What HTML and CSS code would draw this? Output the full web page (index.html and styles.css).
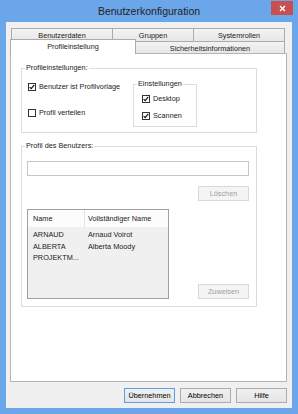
FILE: index.html
```html
<!DOCTYPE html>
<html lang="de">
<head>
    <meta charset="UTF-8">
    <title>Benutzerkonfiguration</title>
    <link rel="stylesheet" href="styles.css">
</head>
<body>

<div class="window">
    <div class="titlebar">
        <span class="title">Benutzerkonfiguration</span>
        <span class="close-btn">
            <svg width="7" height="7" viewBox="0 0 7 7"><path d="M1 1L6 6M6 1L1 6" stroke="#fff" stroke-width="1.4"/></svg>
        </span>
    </div>

    <div class="client">
        <div class="tabs">
            <div class="tab-row back">
                <div class="tab w-data">Benutzerdaten</div>
                <div class="tab w-groups">Gruppen</div>
                <div class="tab w-roles">Systemrollen</div>
            </div>
            <div class="tab-row front">
                <div class="tab active w-profile">Profileinstellung</div>
                <div class="tab w-security">Sicherheitsinformationen</div>
            </div>
        </div>

        <div class="panel">
            <fieldset class="group">
                <legend class="group-title">Profileinstellungen:</legend>
                <div class="prefs">
                    <div class="prefs-left">
                        <label class="check"><span class="box checked"><svg width="6" height="6" viewBox="0 0 6 6"><path d="M0.6 3.1L2.2 4.7L5.3 0.9" fill="none" stroke="#111" stroke-width="1.2"/></svg></span>Benutzer ist Profilvorlage</label>
                        <label class="check"><span class="box"></span>Profil verteilen</label>
                    </div>
                    <fieldset class="group inner">
                        <legend class="group-title">Einstellungen</legend>
                        <div class="inner-body">
                            <label class="check"><span class="box checked"><svg width="6" height="6" viewBox="0 0 6 6"><path d="M0.6 3.1L2.2 4.7L5.3 0.9" fill="none" stroke="#111" stroke-width="1.2"/></svg></span>Desktop</label>
                            <label class="check"><span class="box checked"><svg width="6" height="6" viewBox="0 0 6 6"><path d="M0.6 3.1L2.2 4.7L5.3 0.9" fill="none" stroke="#111" stroke-width="1.2"/></svg></span>Scannen</label>
                        </div>
                    </fieldset>
                </div>
            </fieldset>

            <fieldset class="group second">
                <legend class="group-title">Profil des Benutzers:</legend>
                <div class="profile">
                    <div class="textbox"></div>
                    <div class="row-right">
                        <button class="btn" disabled>Löschen</button>
                    </div>
                    <div class="list-row">
                        <div class="list">
                            <div class="list-head">
                                <span class="col-name">Name</span>
                                <span class="col-full">Vollständiger Name</span>
                            </div>
                            <div class="list-body">
                                <div class="list-item"><span class="col-name">ARNAUD</span><span class="col-full">Arnaud Voirot</span></div>
                                <div class="list-item"><span class="col-name">ALBERTA</span><span class="col-full">Alberta Moody</span></div>
                                <div class="list-item"><span class="col-name">PROJEKTM...</span><span class="col-full"></span></div>
                            </div>
                        </div>
                        <button class="btn" disabled>Zuweisen</button>
                    </div>
                </div>
            </fieldset>
        </div>

        <div class="actions">
            <button class="btn default">Übernehmen</button>
            <button class="btn">Abbrechen</button>
            <button class="btn">Hilfe</button>
        </div>
    </div>
</div>

</body>
</html>
```

FILE: styles.css
```css
* {
    box-sizing: border-box;
}
body {
    margin: 0;
    width: 298px;
    height: 414px;
    overflow: hidden;
    background-color: #6ca6ea;
    font-family: "Liberation Sans", Arial, sans-serif;
    font-size: 7.3px;
    color: #1b1b1b;
}
.window {
    display: flex;
    flex-direction: column;
    height: 414px;
}
.titlebar {
    height: 22px;
    display: grid;
    grid-template-columns: 1fr auto 1fr;
}
.title {
    grid-column: 2;
    align-self: center;
    font-size: 10.5px;
    color: #222;
}
.close-btn {
    grid-column: 3;
    justify-self: end;
    align-self: start;
    width: 22px;
    height: 14px;
    margin: 1px 5px 0 0;
    background-color: #c75050;
    display: flex;
    align-items: center;
    justify-content: center;
}
.client {
    flex: 1;
    margin: 0 6px 6px;
    padding: 6px 5px 5px 4px;
    background-color: #f0f0f0;
    display: flex;
    flex-direction: column;
}

/* tabs */
.tabs {
    height: 25px;
    display: flex;
    flex-direction: column;
}
.tab-row {
    display: flex;
}
.tab-row.back {
    height: 13px;
    padding-left: 1px;
}
.tab-row.front {
    height: 14px;
    margin-top: -2px;
    align-items: flex-end;
}
.tab {
    border: 1px solid #acacac;
    border-bottom: none;
    background: linear-gradient(#f3f3f3, #e7e7e7);
    margin-right: -1px;
    padding-top: 2px;
    line-height: 9px;
    text-align: center;
    white-space: nowrap;
}
.tab-row.back .tab {
    height: 13px;
}
.tab-row.front .tab {
    height: 12px;
}
.tab.active {
    position: relative;
    z-index: 1;
    height: 15px !important;
    margin-bottom: -1px;
    background: #fff;
}
.w-data { width: 102px; }
.w-groups { width: 82px; }
.w-roles { width: 92px; }
.w-profile { width: 126px; }
.w-security { width: 150px; }

.panel {
    flex: 1;
    background-color: #fff;
    border: 1px solid #b4b4b4;
    padding-left: 10px;
}

/* group boxes */
.group {
    width: 236px;
    min-width: 0;
    margin: 9px 0 0;
    padding: 0;
    border: 1px solid #dcdcdc;
}
.group.second {
    margin-top: 8px;
}
.group-title {
    margin-left: 3px;
    padding: 0 1px;
    line-height: 10px;
}
.prefs {
    display: flex;
    padding-bottom: 5px;
}
.prefs-left {
    width: 111px;
    padding: 9px 0 0 6px;
    display: flex;
    flex-direction: column;
    gap: 16px;
}
.group.inner {
    width: 64px;
    margin-top: 6px;
}
.inner-body {
    padding: 5px 0 5px 8px;
    display: flex;
    flex-direction: column;
    gap: 7px;
}
.check {
    display: flex;
    align-items: center;
    gap: 3px;
    height: 10px;
    line-height: 10px;
    white-space: nowrap;
}
.box {
    width: 8px;
    height: 8px;
    border: 1px solid #333;
    background-color: #fff;
    display: flex;
    align-items: center;
    justify-content: center;
}

/* profile */
.profile {
    padding: 10px 7px 7px 5px;
    display: flex;
    flex-direction: column;
}
.textbox {
    height: 15px;
    border: 1px solid #c6c6c6;
    background-color: #fff;
}
.row-right {
    display: flex;
    justify-content: flex-end;
    margin-top: 10px;
}
.list-row {
    display: flex;
    justify-content: space-between;
    align-items: flex-end;
    margin-top: 8px;
}
.list {
    width: 142px;
    height: 90px;
    border: 1px solid #a0a0a0;
    background-color: #f0f0f0;
}
.list-head {
    display: flex;
    align-items: center;
    height: 17px;
    background-color: #fcfcfc;
}
.list-head .col-name {
    border-right: 1px solid #e3e3e3;
    height: 17px;
    line-height: 17px;
}
.list-body {
    padding-top: 2px;
}
.list-item {
    display: flex;
    line-height: 11.7px;
}
.col-name {
    width: 57px;
    padding-left: 5px;
    white-space: nowrap;
}
.col-full {
    padding-left: 3px;
    white-space: nowrap;
}

/* buttons */
.btn {
    width: 51px;
    height: 15px;
    padding: 0;
    border: 1px solid #acacac;
    background: linear-gradient(#f0f0f0, #e5e5e5);
    font: inherit;
    color: #000;
}
.btn:disabled {
    border-color: #d9d9d9;
    background: #f4f4f4;
    color: #a0a0a0;
}
.btn.default {
    border-color: #5b9ee6;
}
.actions {
    display: flex;
    justify-content: flex-end;
    gap: 5px;
    margin-top: 6px;
}
```
